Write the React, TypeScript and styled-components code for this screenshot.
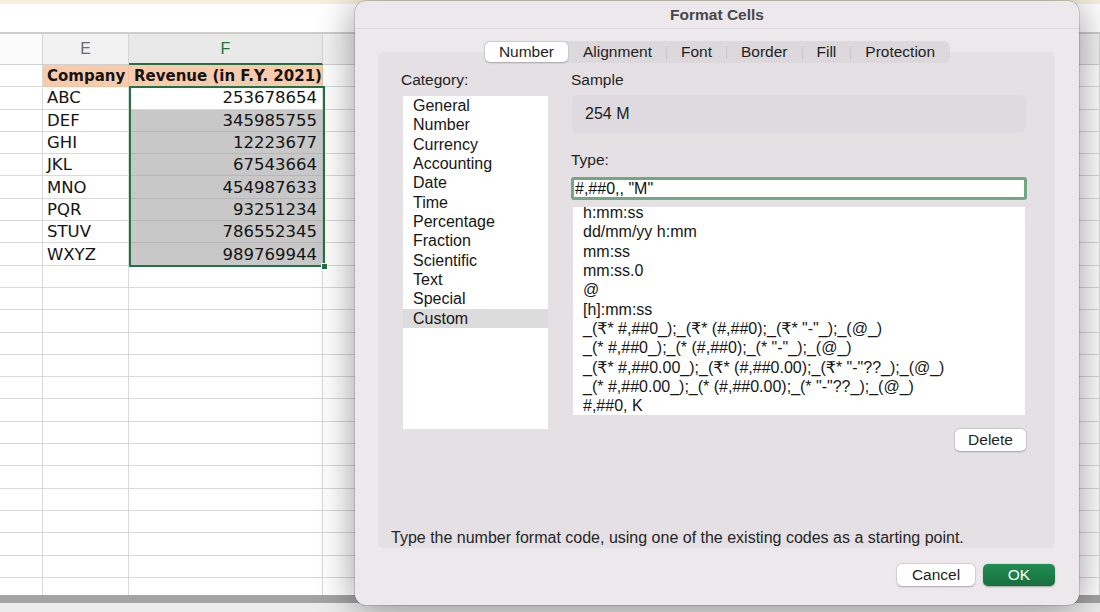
import React from 'react';
import styled, { createGlobalStyle } from 'styled-components';

const GlobalStyle = createGlobalStyle`
  *, *::before, *::after { box-sizing: border-box; }
  html, body { margin: 0; padding: 0; }
  body { width: 1100px; height: 612px; overflow: hidden; background: #fff; }
  #root { width: 1100px; height: 612px; }
`;

const Screen = styled.div`
  position: relative;
  width: 1100px;
  height: 612px;
  overflow: hidden;
  display: flex;
  flex-direction: column;
  background: #fff;
  font-family: "DejaVu Sans", "Liberation Sans", sans-serif;
`;

const TopStrip = styled.div`
  flex: none;
  height: 4px;
  background: #f6efdc;
`;

const FormulaGap = styled.div`
  flex: none;
  height: 30px;
  background: #fff;
  border-bottom: 2px solid #cdcdcd;
`;

const SheetArea = styled.div`
  flex: 1;
  min-height: 0;
  overflow: hidden;
`;

const Sheet = styled.div`
  display: grid;
  grid-template-columns: 43px 86px 194px 1fr;
  grid-template-rows: 31px repeat(24, 22.3px);
`;

const ColHead = styled.div<{ $col: number; $active?: boolean; $bg: string }>`
  grid-row: 1;
  grid-column: ${(p) => p.$col};
  display: flex;
  align-items: center;
  justify-content: center;
  background: ${(p) => p.$bg};
  border-right: 1px solid #d6d6d6;
  border-bottom: ${(p) => (p.$active ? '2px solid #217346' : '1px solid #d0d0d0')};
  color: ${(p) => (p.$active ? '#217346' : '#6b6b6b')};
  font-family: "Liberation Sans", Arial, sans-serif;
  font-size: 16px;
`;

const Cell = styled.div<{
  $row: number;
  $col: number;
  $bg?: string;
  $line?: string;
  $align?: 'left' | 'right';
  $bold?: boolean;
}>`
  grid-row: ${(p) => p.$row};
  grid-column: ${(p) => p.$col};
  display: flex;
  align-items: center;
  justify-content: ${(p) => (p.$align === 'right' ? 'flex-end' : 'flex-start')};
  padding: 0 5px 0 ${(p) => (p.$bold && p.$col === 3 ? 5 : 4)}px;
  background: ${(p) => p.$bg || '#fff'};
  border-right: 1px solid ${(p) => p.$line || '#d9d9d9'};
  border-bottom: 1px solid ${(p) => p.$line || '#d9d9d9'};
  font-size: ${(p) => (p.$bold ? 15 : 16.5)}px;
  font-weight: ${(p) => (p.$bold ? 700 : 400)};
  color: #141414;
  white-space: nowrap;
  min-width: 0;
`;

const Selection = styled.div`
  grid-column: 3;
  grid-row: 3 / 11;
  margin: -1px -2px -1.5px 0;
  border: 2px solid #217346;
  position: relative;
  z-index: 2;
  pointer-events: none;
`;

const FillHandle = styled.span`
  position: absolute;
  right: -5px;
  bottom: -5px;
  width: 7px;
  height: 7px;
  background: #217346;
  border: 1px solid #fff;
`;

const ScrollBar = styled.div`
  flex: none;
  height: 8px;
  background: #a3a3a3;
`;

const Footer = styled.div`
  flex: none;
  height: 9px;
  background: #ececec;
`;

/* ---------- dialog ---------- */

const Dialog = styled.div`
  position: absolute;
  left: 355px;
  top: 1px;
  width: 724px;
  height: 604px;
  border-radius: 11px;
  background: #ece8ec;
  box-shadow: 0 0 0 0.5px rgba(0, 0, 0, 0.25), 0 4px 38px rgba(0, 0, 0, 0.42);
  display: flex;
  flex-direction: column;
  font-family: "Liberation Sans", Arial, "DejaVu Sans", sans-serif;
  color: #1e1e1e;
  z-index: 5;
`;

const TitleBar = styled.div`
  flex: none;
  height: 28px;
  display: flex;
  align-items: center;
  justify-content: center;
  border-bottom: 1px solid #dcd8dc;
  font-size: 15.5px;
  font-weight: 700;
  color: #474747;
`;

const Body = styled.div`
  flex: 1;
  display: flex;
  flex-direction: column;
  padding: 12px 24px 0 23px;
`;

const Tabs = styled.div`
  align-self: center;
  position: relative;
  z-index: 1;
  margin-left: 1px;
  margin-bottom: -11px;
  height: 22px;
  display: flex;
  align-items: center;
  padding: 0 1px;
  border-radius: 6px;
  background: #dcd8dc;
`;

const Tab = styled.div<{ $active?: boolean }>`
  height: 20px;
  display: flex;
  align-items: center;
  padding: 0 14px;
  border-radius: 5px;
  font-size: 15.5px;
  color: #1f1f1f;
  background: ${(p) => (p.$active ? '#fff' : 'transparent')};
  box-shadow: ${(p) => (p.$active ? '0 0.5px 2px rgba(0,0,0,0.25)' : 'none')};
`;

const TabSep = styled.span<{ $hidden?: boolean }>`
  width: 1px;
  height: 13px;
  background: ${(p) => (p.$hidden ? 'transparent' : '#c9c5c9')};
`;

const Panel = styled.div`
  height: 496px;
  border-radius: 6px;
  background: #e4e0e4;
  display: flex;
  flex-direction: column;
  padding: 19px 28px 1px 23px;
`;

const Columns = styled.div`
  display: grid;
  grid-template-columns: 149px 456px;
  column-gap: 21px;
`;

const Col = styled.div`
  display: flex;
  flex-direction: column;
  align-items: stretch;
`;

const Label = styled.div`
  height: 18px;
  line-height: 18px;
  font-size: 15.5px;
  color: #1f1f1f;
`;

const ListBox = styled.div<{ $h: number; $mt: number; $mx: number }>`
  height: ${(p) => p.$h}px;
  margin: ${(p) => p.$mt}px ${(p) => p.$mx}px 0;
  background: #fff;
  overflow: hidden;
`;

const ListInner = styled.div<{ $shift: number }>`
  margin-top: ${(p) => p.$shift}px;
`;

const ListItem = styled.div<{ $selected?: boolean }>`
  height: 19.35px;
  line-height: 19.35px;
  padding-left: 10px;
  font-size: 16px;
  color: #161616;
  white-space: nowrap;
  background: ${(p) => (p.$selected ? '#dcdcdc' : 'transparent')};
`;

const SampleBox = styled.div`
  height: 38px;
  margin: 6px 1px 0;
  border-radius: 6px;
  background: #dedadf;
  display: flex;
  align-items: center;
  padding-left: 13px;
  font-size: 16px;
  color: #1a1a1a;
`;

const TypeLabel = styled(Label)`
  margin-top: 18px;
`;

const TypeInput = styled.div`
  height: 23px;
  margin-top: 8px;
  border: 3px solid #73a683;
  border-radius: 3px;
  background: #fff;
  display: flex;
  align-items: center;
  padding-left: 1px;
  font-size: 16px;
  color: #111;
  white-space: pre;
`;

const Button = styled.div<{ $primary?: boolean; $w: number }>`
  width: ${(p) => p.$w}px;
  height: 22px;
  display: flex;
  align-items: center;
  justify-content: center;
  border-radius: 5px;
  font-size: 15.5px;
  color: ${(p) => (p.$primary ? '#fff' : '#1f1f1f')};
  background: ${(p) => (p.$primary ? 'linear-gradient(#228c51, #16703f)' : '#fff')};
  box-shadow: ${(p) =>
    p.$primary
      ? '0 0.5px 1.5px rgba(0,0,0,0.3)'
      : '0 0 0 0.5px rgba(0,0,0,0.08), 0 0.5px 2px rgba(0,0,0,0.25)'};
`;

const DeleteRow = styled.div`
  display: flex;
  justify-content: flex-end;
  margin: 14px 1px 0 0;
`;

const Spacer = styled.div`
  flex: 1;
`;

const Hint = styled.div`
  padding-left: 13px;
  height: 18px;
  line-height: 18px;
  font-size: 16px;
  color: #262626;
  white-space: nowrap;
  margin-left: -23px;
`;

const DialogFooter = styled.div`
  display: flex;
  justify-content: flex-end;
  gap: 8px;
  padding-top: 16px;
`;

const data: [string, string][] = [
  ['ABC', '253678654'],
  ['DEF', '345985755'],
  ['GHI', '12223677'],
  ['JKL', '67543664'],
  ['MNO', '454987633'],
  ['PQR', '93251234'],
  ['STUV', '786552345'],
  ['WXYZ', '989769944'],
];

const categories = [
  'General',
  'Number',
  'Currency',
  'Accounting',
  'Date',
  'Time',
  'Percentage',
  'Fraction',
  'Scientific',
  'Text',
  'Special',
  'Custom',
];

const types = [
  'h:mm:ss',
  'dd/mm/yy h:mm',
  'mm:ss',
  'mm:ss.0',
  '@',
  '[h]:mm:ss',
  '_(₹* #,##0_);_(₹* (#,##0);_(₹* "-"_);_(@_)',
  '_(* #,##0_);_(* (#,##0);_(* "-"_);_(@_)',
  '_(₹* #,##0.00_);_(₹* (#,##0.00);_(₹* "-"??_);_(@_)',
  '_(* #,##0.00_);_(* (#,##0.00);_(* "-"??_);_(@_)',
  '#,##0, K',
];

const tabs = ['Number', 'Alignment', 'Font', 'Border', 'Fill', 'Protection'];

export default function App() {
  const emptyRows = Array.from({ length: 15 }, (_, i) => 11 + i);
  return (
    <Screen>
      <GlobalStyle />
      <TopStrip />
      <FormulaGap />
      <SheetArea>
        <Sheet>
          <ColHead $col={1} $bg="#fbfbfb" />
          <ColHead $col={2} $bg="#f2f2f2">E</ColHead>
          <ColHead $col={3} $bg="#e9e9e9" $active>
            F
          </ColHead>
          <ColHead $col={4} $bg="#f2f2f2" />

          <Cell $row={2} $col={1} />
          <Cell $row={2} $col={2} $bg="#f8cbad" $line="#efc2a4" $bold>
            Company
          </Cell>
          <Cell $row={2} $col={3} $bg="#f8cbad" $line="#efc2a4" $bold>
            Revenue (in F.Y. 2021)
          </Cell>
          <Cell $row={2} $col={4} />

          {data.map(([name, value], i) => (
            <React.Fragment key={name}>
              <Cell $row={3 + i} $col={1} />
              <Cell $row={3 + i} $col={2}>
                {name}
              </Cell>
              <Cell
                $row={3 + i}
                $col={3}
                $align="right"
                $bg={i === 0 ? '#fff' : '#c8c8c8'}
                $line={i === 0 ? '#d9d9d9' : '#b8b8b8'}
              >
                {value}
              </Cell>
              <Cell $row={3 + i} $col={4} />
            </React.Fragment>
          ))}

          {emptyRows.map((r) => (
            <React.Fragment key={r}>
              <Cell $row={r} $col={1} />
              <Cell $row={r} $col={2} />
              <Cell $row={r} $col={3} />
              <Cell $row={r} $col={4} />
            </React.Fragment>
          ))}

          <Selection>
            <FillHandle />
          </Selection>
        </Sheet>
      </SheetArea>
      <ScrollBar />
      <Footer />

      <Dialog>
        <TitleBar>Format Cells</TitleBar>
        <Body>
          <Tabs>
            {tabs.map((t, i) => (
              <React.Fragment key={t}>
                {i > 0 && <TabSep $hidden={i === 1} />}
                <Tab $active={i === 0}>{t}</Tab>
              </React.Fragment>
            ))}
          </Tabs>
          <Panel>
            <Columns>
              <Col>
                <Label>Category:</Label>
                <ListBox $h={333} $mt={7} $mx={2}>
                  <ListInner $shift={0}>
                    {categories.map((c) => (
                      <ListItem key={c} $selected={c === 'Custom'}>
                        {c}
                      </ListItem>
                    ))}
                  </ListInner>
                </ListBox>
              </Col>
              <Col>
                <Label>Sample</Label>
                <SampleBox>254 M</SampleBox>
                <TypeLabel>Type:</TypeLabel>
                <TypeInput>#,##0,, "M"</TypeInput>
                <ListBox $h={208} $mt={7} $mx={2}>
                  <ListInner $shift={-4}>
                    {types.map((t) => (
                      <ListItem key={t}>{t}</ListItem>
                    ))}
                  </ListInner>
                </ListBox>
                <DeleteRow>
                  <Button $w={71}>Delete</Button>
                </DeleteRow>
              </Col>
            </Columns>
            <Spacer />
            <Hint>Type the number format code, using one of the existing codes as a starting point.</Hint>
          </Panel>
          <DialogFooter>
            <Button $w={78}>Cancel</Button>
            <Button $w={72} $primary>
              OK
            </Button>
          </DialogFooter>
        </Body>
      </Dialog>
    </Screen>
  );
}
